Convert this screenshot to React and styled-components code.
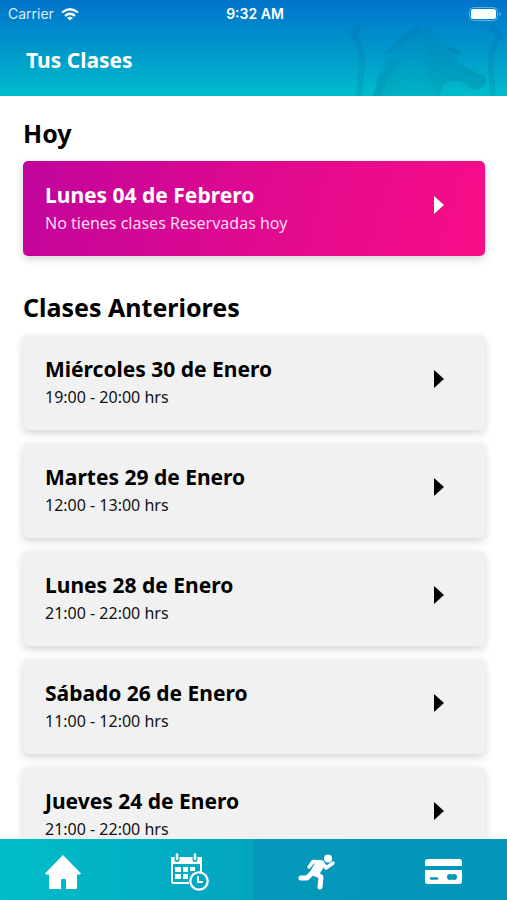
import React from "react";
import styled, { createGlobalStyle } from "styled-components";

const GlobalStyle = createGlobalStyle`
  * { box-sizing: border-box; }
  body { margin: 0; background: #fff; font-family: "Noto Sans", sans-serif; color: #000; }
  h1, h2, h3, p, ul { margin: 0; padding: 0; }
`;

const Screen = styled.div`
  display: flex;
  flex-direction: column;
  height: 100vh;
  overflow: hidden;
`;

const Header = styled.header`
  position: relative;
  flex: none;
  background: linear-gradient(180deg, #0074cc 0%, #0092cb 45%, #00bccb 100%);
  color: #fff;
`;

const HorseMark = styled.svg`
  position: absolute;
  right: 0;
  bottom: 0;
  width: 160px;
  height: 76px;
`;

const StatusBar = styled.div`
  position: relative;
  display: grid;
  grid-template-columns: 1fr auto 1fr;
  align-items: center;
  height: 28px;
  padding: 0 5px 0 8px;
  font: 400 14px/28px Inter, sans-serif;
`;

const Carrier = styled.div`
  display: flex;
  align-items: center;
  gap: 7px;
  color: #d8edf9;
`;

const Time = styled.div`
  font-weight: 600;
`;

const Battery = styled.svg`
  justify-self: end;
`;

const PageTitle = styled.h1`
  position: relative;
  padding: 16px 26px 20px;
  font-size: 21px;
  line-height: 32px;
  font-weight: 700;
`;

const Content = styled.main`
  flex: 1;
  min-height: 0;
  overflow: hidden;
  padding: 20px 22px 0 23px;
`;

const Section = styled.section`
  margin-bottom: 34px;
`;

const SectionTitle = styled.h2`
  font-size: 25px;
  line-height: 34px;
  font-weight: 700;
  margin-bottom: 11px;
`;

const List = styled.ul`
  display: flex;
  flex-direction: column;
  gap: 13px;
  list-style: none;
`;

const Card = styled.button`
  display: flex;
  align-items: center;
  justify-content: space-between;
  width: 100%;
  height: 95px;
  padding: 0 41px 4px 22px;
  border: 0;
  border-radius: 5px;
  text-align: left;
  font-family: inherit;
  color: ${(p) => (p.$today ? "#fff" : "#000")};
  background: ${(p) =>
    p.$today ? "linear-gradient(105deg, #c1049c 0%, #e20a8e 55%, #f80d87 100%)" : "#f1f1f1"};
  box-shadow: 0 3px 9px rgba(0, 0, 0, 0.17);
`;

const CardText = styled.span`
  display: flex;
  flex-direction: column;
  gap: 3px;
`;

const CardDate = styled.strong`
  font-size: 21px;
  line-height: 30px;
  font-weight: 700;
`;

const CardDetail = styled.span`
  font-size: 16px;
  line-height: 20px;
  color: ${(p) => (p.$today ? "#ffd9f2" : "#111")};
`;

const CardArrow = styled.svg`
  flex: none;
  margin-bottom: 4px;
`;

const TabBar = styled.nav`
  position: relative;
  flex: none;
  display: grid;
  grid-template-columns: repeat(4, 1fr);
  height: 61px;
  background: linear-gradient(90deg, #00bdc9 0%, #04a4c0 50%, #0498bb 50%, #0496b9 100%);
`;

const Tab = styled.button`
  display: flex;
  align-items: center;
  justify-content: center;
  padding: 5px 0 0;
  border: 0;
  background: none;
  color: #fff;
`;

const classes = [
  ["Miércoles 30 de Enero", "19:00 - 20:00 hrs"],
  ["Martes 29 de Enero", "12:00 - 13:00 hrs"],
  ["Lunes 28 de Enero", "21:00 - 22:00 hrs"],
  ["Sábado 26 de Enero", "11:00 - 12:00 hrs"],
  ["Jueves 24 de Enero", "21:00 - 22:00 hrs"],
];

function ClassCard({ date, detail, today }) {
  return (
    <Card type="button" $today={today}>
      <CardText>
        <CardDate>{date}</CardDate>
        <CardDetail $today={today}>{detail}</CardDetail>
      </CardText>
      <CardArrow width="10" height="18" viewBox="0 0 10 18" fill="currentColor" aria-hidden="true">
        <path d="M0 0L10 9L0 18Z" />
      </CardArrow>
    </Card>
  );
}

function Horse() {
  return (
    <HorseMark viewBox="347 20 160 76" aria-hidden="true">
      <defs>
        <linearGradient id="coat" x1="0" x2="1" y1="0" y2="0">
          <stop offset="0" stopColor="#00708f" stopOpacity="0.2" />
          <stop offset="0.35" stopColor="#007c9e" stopOpacity="0.12" />
          <stop offset="1" stopColor="#00708f" stopOpacity="0.22" />
        </linearGradient>
      </defs>
      <g fill="none" stroke="#005f86" strokeOpacity="0.14" strokeWidth="6">
        <path d="M360 26L353 34Q363 47 362 66L359 96" />
        <path d="M491 26L500 36Q489 49 491 70L493 96" />
      </g>
      <path
        d="M372 96Q378 86 377 80Q374 84 373 87Q378 74 386 65Q382 66 378 70Q386 58 396 54L385 54Q394 42 406 33Q414 24 421 27Q436 31 444 44Q458 48 462 54Q456 57 458 62Q474 73 485 76Q488 83 482 87Q474 93 469 86Q459 78 447 82Q440 87 440 96Z"
        fill="url(#coat)"
      />
      <path
        d="M427 47Q422 66 429 78Q436 88 438 96L440 96Q440 87 447 82Q459 78 469 86Q474 93 482 87Q488 83 485 76Q474 73 458 62Q450 54 427 47Z"
        fill="#005f86"
        fillOpacity="0.06"
      />
      <path d="M444 47Q456 46 462 54Q454 55 444 47Z" fill="#005f86" fillOpacity="0.14" />
      <path d="M386 54Q394 42 406 33Q414 24 421 27L417 36Q401 42 391 52ZM373 92Q382 66 404 56Q386 74 382 96H372Z" fill="#006186" fillOpacity="0.1" />
    </HorseMark>
  );
}

export default function App() {
  return (
    <Screen>
      <GlobalStyle />
      <Header>
        <Horse />
        <StatusBar>
          <Carrier>
            Carrier
            <svg width="18" height="13" viewBox="0 0 18 13" fill="none" stroke="#fff" strokeWidth="2.2" aria-hidden="true">
              <path d="M1 4.5Q9 -2 17 4.5" />
              <path d="M4 7.8Q9 3.7 14 7.8" />
              <path d="M9 12.5L6 9.8Q9 7.5 12 9.8Z" fill="#fff" stroke="none" />
            </svg>
          </Carrier>
          <Time>9:32 AM</Time>
          <Battery width="33" height="15" viewBox="0 0 33 15" aria-hidden="true">
            <rect x="0.5" y="0.5" width="28" height="13" rx="4" fill="none" stroke="#5caee2" />
            <rect x="2" y="2" width="25" height="10" rx="2.5" fill="#fff" />
            <path d="M30.5 5Q33 7 30.5 9Z" fill="#8ac4eb" />
          </Battery>
        </StatusBar>
        <PageTitle>Tus Clases</PageTitle>
      </Header>
      <Content>
        <Section>
          <SectionTitle>Hoy</SectionTitle>
          <ClassCard today date="Lunes 04 de Febrero" detail="No tienes clases Reservadas hoy" />
        </Section>
        <Section>
          <SectionTitle>Clases Anteriores</SectionTitle>
          <List>
            {classes.map(([date, detail]) => (
              <li key={date}>
                <ClassCard date={date} detail={detail} />
              </li>
            ))}
          </List>
        </Section>
      </Content>
      <TabBar>
        <Tab type="button" aria-label="Inicio">
          <svg width="36" height="34" viewBox="0 0 36 34" fill="currentColor">
            <path d="M18 0L36 18.5L35 19.5H32V33Q32 34 31 34H21V25Q21 24 20 24H17Q16 24 16 25V34H5Q4 34 4 33V19.5H1L0 18.5Z" />
          </svg>
        </Tab>
        <Tab type="button" aria-label="Clases">
          <svg width="38" height="38" viewBox="0 0 38 38" fill="none" stroke="currentColor">
            <path d="M18 30H3Q1 30 1 28V5H30V19" strokeWidth="2" />
            <path d="M0 4H31V11H0Z" fill="currentColor" stroke="none" />
            <path d="M6 1V6.5M24 1V6.5" stroke="#02aec4" strokeWidth="5" strokeLinecap="round" />
            <path d="M6 1.5V6M24 1.5V6" strokeWidth="2.5" strokeLinecap="round" />
            <path d="M4 14H10V19H4ZM12 14H17V19H12ZM19 14H24V18H19ZM4 21H10V26H4ZM12 21H17V26H12Z" fill="currentColor" stroke="none" />
            <circle cx="28" cy="28" r="8.7" strokeWidth="2.2" />
            <path d="M27 23V29H32" strokeWidth="2" />
          </svg>
        </Tab>
        <Tab type="button" aria-label="Actividad">
          <svg width="38" height="36" viewBox="0 0 38 36" fill="none" stroke="currentColor" strokeLinecap="round" strokeLinejoin="round">
            <circle cx="30" cy="4.5" r="4" fill="currentColor" stroke="none" />
            <path d="M11 13L15 7.5L24 8L28 14L35 9" strokeWidth="3.5" />
            <path d="M18 9L26 11L19 22L12 20Z" fill="currentColor" strokeWidth="2" />
            <path d="M14 19L9 24H3" strokeWidth="5" />
            <path d="M17 19L23 23L22 33" strokeWidth="5" />
          </svg>
        </Tab>
        <Tab type="button" aria-label="Pagos">
          <svg width="37" height="26" viewBox="0 0 37 26" aria-hidden="true">
            <path d="M3 0H34Q37 0 37 3V7H0V3Q0 0 3 0ZM0 11H37V22Q37 25 34 25H3Q0 25 0 22Z" fill="currentColor" />
            <path d="M6 19.5H12" stroke="#0498bb" strokeWidth="2.5" strokeLinecap="round" />
            <circle cx="25" cy="18" r="3" fill="#0498bb" />
            <circle cx="29" cy="18" r="3" fill="#0498bb" />
          </svg>
        </Tab>
      </TabBar>
    </Screen>
  );
}
